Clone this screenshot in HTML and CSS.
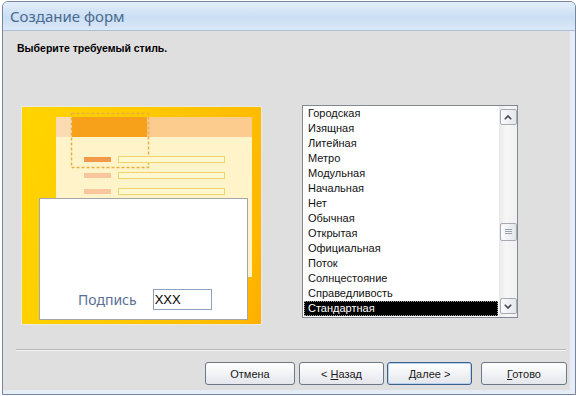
FILE: index.html
```html
<!DOCTYPE html>
<html>
<head>
  <meta charset="utf-8">
  <title>Создание форм</title>
  <link rel="stylesheet" href="styles.css">
</head>
<body>
  <div class="window">
    <div class="titlebar">Создание форм</div>

    <div class="client">
      <div class="prompt">Выберите требуемый стиль.</div>

      <div class="main">
        <!-- Style preview -->
        <div class="preview">
          <svg class="preview-art" width="239" height="217" viewBox="0 0 239 217">
            <rect x="34" y="10" width="196" height="160" fill="#fff4c9"/>
            <rect x="34" y="10" width="196" height="20" fill="#fccb8e"/>
            <rect x="34" y="10" width="16" height="20" fill="#fbdcb2"/>
            <rect x="50" y="10" width="75" height="20" fill="#f7a11b"/>
            <rect x="49.5" y="6.5" width="77" height="54" fill="none" stroke="#e5b044" stroke-width="1.5" stroke-dasharray="3 2"/>
            <rect x="62" y="50" width="27" height="5" fill="#f29a4a"/>
            <rect x="62" y="66" width="27" height="5" fill="#f9c69e"/>
            <rect x="62" y="82" width="27" height="5" fill="#f9c69e"/>
            <rect x="96.5" y="49.5" width="106" height="6" fill="#fff7cf" stroke="#f2d46c"/>
            <rect x="96.5" y="65.5" width="106" height="6" fill="#fff7cf" stroke="#f2d46c"/>
            <rect x="96.5" y="81.5" width="106" height="6" fill="#fff7cf" stroke="#f2d46c"/>
          </svg>
          <div class="sample">
            <span class="sample-label">Подпись</span>
            <span class="sample-field">XXX</span>
          </div>
        </div>

        <!-- Style list -->
        <div class="listbox">
          <ul class="items">
            <li>Городская</li>
            <li>Изящная</li>
            <li>Литейная</li>
            <li>Метро</li>
            <li>Модульная</li>
            <li>Начальная</li>
            <li>Нет</li>
            <li>Обычная</li>
            <li>Открытая</li>
            <li>Официальная</li>
            <li>Поток</li>
            <li>Солнцестояние</li>
            <li>Справедливость</li>
            <li class="selected">Стандартная</li>
          </ul>
          <div class="scrollbar">
            <div class="sb-btn">
              <svg width="8" height="5" viewBox="0 0 8 5"><path d="M0.8 4.2 L4 1 L7.2 4.2" fill="none" stroke="#3f4650" stroke-width="1.6"/></svg>
            </div>
            <div class="sb-btn sb-thumb">
              <svg width="7" height="6" viewBox="0 0 7 6"><path d="M0 0.5 H7 M0 2.5 H7 M0 4.5 H7" stroke="#9aa2ae" stroke-width="1"/></svg>
            </div>
            <div class="sb-btn sb-down">
              <svg width="8" height="5" viewBox="0 0 8 5"><path d="M0.8 0.8 L4 4 L7.2 0.8" fill="none" stroke="#3f4650" stroke-width="1.6"/></svg>
            </div>
          </div>
        </div>
      </div>

      <div class="separator"></div>

      <div class="buttons">
        <button class="btn btn-cancel">Отмена</button>
        <button class="btn btn-back">&lt; <u>Н</u>азад</button>
        <button class="btn btn-next btn-default"><u>Д</u>алее &gt;</button>
        <button class="btn btn-finish"><u>Г</u>отово</button>
      </div>
    </div>
  </div>
</body>
</html>
```

FILE: styles.css
```css
body {
  margin: 0;
  background-color: #ffffff;
  font-family: "Liberation Sans", Arial, sans-serif;
}
.window {
  box-sizing: border-box;
  width: 574px;
  height: 394px;
  margin: 1px 0 0 2px;
  border: 1px solid #75869e;
  border-radius: 6px 6px 0 0;
  background-color: #e6edf6;
  display: flex;
  flex-direction: column;
  overflow: hidden;
}
.titlebar {
  height: 28px;
  line-height: 28px;
  padding-left: 7px;
  border-bottom: 1px solid #adc0d6;
  background: linear-gradient(#e3eefa, #cadef4 55%, #dbe8f7);
  font-family: "Noto Sans", "Open Sans", sans-serif;
  font-size: 15px;
  color: #4b6a8f;
}
.client {
  flex: 1;
  margin: 0 5px 4px 0;
  background-color: #e0dfe0;
  display: flex;
  flex-direction: column;
}
.prompt {
  padding: 10px 0 0 14px;
  line-height: 14px;
  font-size: 10.5px;
  font-weight: bold;
  color: #000;
}
.main {
  display: flex;
  align-items: flex-start;
  margin-top: 50px;
  padding-left: 18px;
}

/* Preview */
.preview {
  box-sizing: border-box;
  width: 241px;
  height: 219px;
  margin-top: 1px;
  border: 1px solid #eeeae0;
  background: linear-gradient(100deg, #ffd400 0%, #ffc900 45%, #ffb900 92%, #ffad00 100%);
  display: grid;
}
.preview-art,
.sample {
  grid-area: 1 / 1;
}
.sample {
  box-sizing: border-box;
  align-self: start;
  width: 209px;
  height: 122px;
  margin: 91px 0 0 17px;
  padding: 0 0 9px 38px;
  border: 1px solid #a6a6a6;
  background-color: #ffffff;
  display: flex;
  align-items: flex-end;
  gap: 16px;
}
.sample-label {
  line-height: 21px;
  font-family: "Noto Sans", "Open Sans", sans-serif;
  font-size: 14px;
  color: #5a6e96;
}
.sample-field {
  box-sizing: border-box;
  width: 59px;
  height: 21px;
  line-height: 19px;
  padding-left: 1px;
  border: 1px solid #8ea3bb;
  font-size: 13px;
  color: #000;
}

/* List */
.listbox {
  box-sizing: border-box;
  width: 216px;
  height: 213px;
  margin-left: 40px;
  border: 1px solid #828790;
  background-color: #ffffff;
  display: flex;
}
.items {
  flex: 1;
  list-style: none;
  margin: 0;
  padding: 0 1px;
  font-size: 11px;
  color: #111;
}
.items li {
  height: 15px;
  line-height: 15px;
  padding-left: 4px;
}
.items li.selected {
  background-color: #000;
  color: #fff;
  outline: 1px dotted #9a9a9a;
  outline-offset: -1px;
}
.scrollbar {
  width: 18px;
  padding: 3px 0 3px 0;
  background: linear-gradient(to right, #e9e9ea, #f7f7f8 40%, #f0f0f1);
  display: flex;
  flex-direction: column;
  align-items: center;
}
.sb-btn {
  box-sizing: border-box;
  width: 17px;
  height: 16px;
  border: 1px solid #a5abb5;
  border-radius: 2px;
  background: linear-gradient(to right, #fbfbfc, #e4e6ea);
  display: flex;
  align-items: center;
  justify-content: center;
}
.sb-thumb {
  height: 18px;
  margin-top: 98px;
}
.sb-down {
  margin-top: auto;
}

/* Footer */
.separator {
  margin: 24px 4px 0 13px;
  border-top: 1px solid #b8b8b8;
  border-bottom: 1px solid #f6f6f6;
}
.buttons {
  display: flex;
  justify-content: flex-end;
  margin-top: 11px;
  padding-right: 3px;
}
.btn {
  box-sizing: border-box;
  height: 23px;
  width: 85px;
  padding: 0;
  border: 1px solid #6c7788;
  border-radius: 3px;
  background: linear-gradient(#ffffff, #f2f3f6 50%, #e3e6ec);
  font-family: "Liberation Sans", Arial, sans-serif;
  font-size: 11px;
  color: #1b1b1b;
}
.btn u {
  text-underline-offset: 1px;
}
.btn-cancel {
  width: 90px;
}
.btn-back {
  margin-left: 4px;
}
.btn-next {
  margin-left: 3px;
}
.btn-finish {
  width: 86px;
  margin-left: 9px;
}
.btn-default {
  border-color: #3d5f8c;
  box-shadow: inset 0 0 0 1px #b9d3ee;
}
```
